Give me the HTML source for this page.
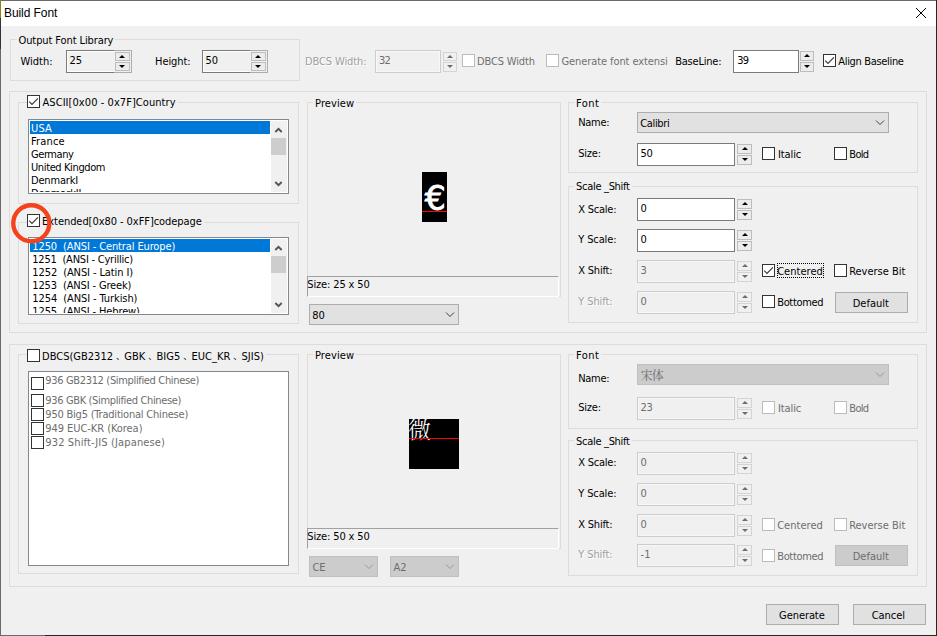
<!DOCTYPE html>
<html lang="en"><head><meta charset="utf-8"><title>Build Font</title>
<style>
html,body{margin:0;padding:0}
body{width:937px;height:636px;overflow:hidden;background:#f0f0f0;position:relative;font-family:'DejaVu Sans Condensed','Liberation Sans',sans-serif;font-size:11px;line-height:13px;color:#000}
.a{position:absolute;box-sizing:border-box}
.tx{position:absolute;white-space:pre;height:13px;line-height:13px}
.lbl{background:#f0f0f0}
.dis{color:#a0a0a0;text-shadow:1px 1px 0 #fff}
.gr{color:#6d6d6d}
.gr2{color:#707070}
.sel{color:#fff}
.cjk{font-family:'DejaVu Sans Condensed','Liberation Sans','Noto Serif CJK SC',sans-serif}
.ic{display:inline-block;width:11.3px;font-size:9px;line-height:13px;text-indent:3px;vertical-align:baseline;letter-spacing:0;position:relative;top:-1px}
.cjk12{font-family:'Liberation Serif','Noto Serif CJK SC',serif;font-size:12px}
.gb{position:absolute;box-sizing:border-box;border:1px solid #dcdcdc}
.ed{position:absolute;box-sizing:border-box;border:1px solid #7a7a7a;background:#fff}
.ed.ro{background:#f0f0f0;box-shadow:inset 1px 0 0 #fff,inset 0 1px 0 #fff,inset 0 -1px 0 #fff}
.ed.d{border-color:#cccccc;background:#f0f0f0;box-shadow:inset 0 0 0 1px #f7f7f7}
.sb{position:absolute;box-sizing:border-box;width:15px;height:10px;border:1px solid #bdbdbd;background:#ececec}
.sb i{position:absolute;left:4px;top:2px;width:0;height:0;border-left:3px solid transparent;border-right:3px solid transparent}
.sb.u i{border-bottom:3px solid #000;top:2px}
.sb.dn i{border-top:3px solid #000;top:2px}
.sb.x{border-color:#d4d4d4;background:#f0f0f0}
.sb.x.u i{border-bottom-color:#6d6d6d}
.sb.x.dn i{border-top-color:#6d6d6d}
.cb{position:absolute;box-sizing:border-box;width:13px;height:13px;border:1px solid #333;background:#fff}
.cb.d{border-color:#bcbcbc}
.cb svg{position:absolute;left:0;top:0}
.bt{position:absolute;box-sizing:border-box;border:1px solid #adadad;background:#e1e1e1}
.bt.d{border-color:#bfbfbf;background:#cccccc}
.lb{position:absolute;box-sizing:border-box;border:1px solid #828790;background:#fff}
.hl{position:absolute;background:#0078d7}

</style></head><body>
<div class="a" style="left:0;top:0;width:937px;height:26px;background:#fff"></div>
<div class="a" style="left:0;top:0;width:937px;height:1px;background:#6a6a66"></div>
<div class="a" style="left:0;top:0;width:1px;height:636px;background:#6a6a6a"></div>
<div class="a" style="left:0;top:18px;width:1px;height:31px;background:#333"></div>
<div class="a" style="left:0;top:0;width:1px;height:18px;background:#858518"></div>
<div class="a" style="left:936px;top:0;width:1px;height:636px;background:#262626"></div>
<div class="a" style="left:0;top:635px;width:937px;height:1px;background:#262626"></div>
<div class="a" style="left:0;top:635px;width:45px;height:1px;background:#6a6a6a"></div>
<div class="tx" style="left:4px;top:6px;letter-spacing:-0.08px;font-family:'Liberation Sans',sans-serif;font-size:12px;line-height:15px;height:15px">Build Font</div>
<svg class="a" style="left:915px;top:7px" width="12" height="12" viewBox="0 0 12 12"><path d="M1 1 L11 11 M11 1 L1 11" stroke="#000" stroke-width="1" fill="none"/></svg>
<div class="gb" style="left:10px;top:39px;width:290px;height:42px"></div>
<div class="gb" style="left:9px;top:91px;width:918px;height:242px"></div>
<div class="gb" style="left:18px;top:102px;width:281px;height:102px"></div>
<div class="gb" style="left:18px;top:222px;width:281px;height:102px"></div>
<div class="gb" style="left:307px;top:102px;width:254px;height:195px"></div>
<div class="gb" style="left:568px;top:102px;width:350px;height:71px"></div>
<div class="gb" style="left:568px;top:186px;width:350px;height:137px"></div>
<div class="gb" style="left:9px;top:344px;width:918px;height:243px"></div>
<div class="gb" style="left:18px;top:354px;width:281px;height:220px"></div>
<div class="gb" style="left:307px;top:354px;width:254px;height:195px"></div>
<div class="gb" style="left:568px;top:354px;width:350px;height:75px"></div>
<div class="gb" style="left:568px;top:440px;width:350px;height:136px"></div>
<div class="a" style="left:307px;top:276px;width:252px;height:21px;background:#f0f0f0;border-top:1px solid #a0a0a0;border-left:1px solid #a0a0a0;border-right:1px solid #fff;border-bottom:1px solid #fff"></div>
<div class="a" style="left:307px;top:528px;width:252px;height:21px;background:#f0f0f0;border-top:1px solid #a0a0a0;border-left:1px solid #a0a0a0;border-right:1px solid #fff;border-bottom:1px solid #fff"></div>
<div class="a" style="left:422px;top:172px;width:25px;height:50px;background:#000;overflow:hidden"><span style="position:absolute;left:0.7px;top:7px;width:25px;text-align:center;color:#fff;font-family:'DejaVu Sans','Liberation Sans',sans-serif;font-size:33px;line-height:40px;-webkit-text-stroke:0.9px #fff">€</span><div class="a" style="left:0;top:39px;width:25px;height:1px;background:#f00"></div></div>
<div class="a" style="left:409px;top:419px;width:50px;height:50px;background:#000;overflow:hidden"><span style="position:absolute;left:-1px;top:-2px;color:#fff;font-family:'Liberation Serif','Noto Serif CJK SC',serif;font-weight:300;font-size:23px;line-height:28px">微</span><div class="a" style="left:0;top:19px;width:50px;height:1px;background:#f00"></div></div>
<div class="a" style="left:66px;top:50px;width:66px;height:23px;border:1px solid #a9acb2;background:#f0f0f0"></div>
<div class="ed ro" style="left:66px;top:50px;width:48px;height:23px;border-right:none"></div>
<div class="sb u" style="left:115px;top:52px;height:9px"><i style="left:3px"></i></div><div class="sb dn" style="left:115px;top:62px;height:9px"><i style="left:3px"></i></div>
<div class="a" style="left:202px;top:50px;width:66px;height:23px;border:1px solid #a9acb2;background:#f0f0f0"></div>
<div class="ed ro" style="left:202px;top:50px;width:48px;height:23px;border-right:none"></div>
<div class="sb u" style="left:251px;top:52px;height:9px"><i style="left:3px"></i></div><div class="sb dn" style="left:251px;top:62px;height:9px"><i style="left:3px"></i></div>
<div class="ed d" style="left:375px;top:50px;width:66px;height:23px"></div>
<div class="sb u x" style="left:443px;top:52px;width:14px;height:9px"><i style="left:2.5px"></i></div><div class="sb dn x" style="left:443px;top:62px;width:14px;height:10px"><i style="left:2.5px"></i></div>
<div class="ed " style="left:733px;top:50px;width:66px;height:23px"></div>
<div class="sb u " style="left:800px;top:51px;width:14px;height:10px"><i style="left:2.5px"></i></div><div class="sb dn " style="left:800px;top:62px;width:14px;height:10px"><i style="left:2.5px"></i></div>
<div class="ed " style="left:637px;top:143px;width:98px;height:23px"></div>
<div class="sb u " style="left:737px;top:144px;width:15px;height:10px"><i style="left:3.5px"></i></div><div class="sb dn " style="left:737px;top:155px;width:15px;height:10px"><i style="left:3.5px"></i></div>
<div class="ed " style="left:637px;top:198px;width:98px;height:23px"></div>
<div class="sb u " style="left:737px;top:199px;width:15px;height:10px"><i style="left:3.5px"></i></div><div class="sb dn " style="left:737px;top:210px;width:15px;height:10px"><i style="left:3.5px"></i></div>
<div class="ed " style="left:637px;top:229px;width:98px;height:23px"></div>
<div class="sb u " style="left:737px;top:230px;width:15px;height:10px"><i style="left:3.5px"></i></div><div class="sb dn " style="left:737px;top:241px;width:15px;height:10px"><i style="left:3.5px"></i></div>
<div class="ed d" style="left:637px;top:260px;width:98px;height:23px"></div>
<div class="sb u x" style="left:737px;top:261px;width:15px;height:10px"><i style="left:3.5px"></i></div><div class="sb dn x" style="left:737px;top:272px;width:15px;height:10px"><i style="left:3.5px"></i></div>
<div class="ed d" style="left:637px;top:291px;width:98px;height:23px"></div>
<div class="sb u x" style="left:737px;top:292px;width:15px;height:10px"><i style="left:3.5px"></i></div><div class="sb dn x" style="left:737px;top:303px;width:15px;height:10px"><i style="left:3.5px"></i></div>
<div class="ed d" style="left:637px;top:397px;width:98px;height:23px"></div>
<div class="sb u x" style="left:737px;top:398px;width:15px;height:10px"><i style="left:3.5px"></i></div><div class="sb dn x" style="left:737px;top:409px;width:15px;height:10px"><i style="left:3.5px"></i></div>
<div class="ed d" style="left:637px;top:452px;width:98px;height:23px"></div>
<div class="sb u x" style="left:737px;top:453px;width:15px;height:10px"><i style="left:3.5px"></i></div><div class="sb dn x" style="left:737px;top:464px;width:15px;height:10px"><i style="left:3.5px"></i></div>
<div class="ed d" style="left:637px;top:483px;width:98px;height:23px"></div>
<div class="sb u x" style="left:737px;top:484px;width:15px;height:10px"><i style="left:3.5px"></i></div><div class="sb dn x" style="left:737px;top:495px;width:15px;height:10px"><i style="left:3.5px"></i></div>
<div class="ed d" style="left:637px;top:514px;width:98px;height:23px"></div>
<div class="sb u x" style="left:737px;top:515px;width:15px;height:10px"><i style="left:3.5px"></i></div><div class="sb dn x" style="left:737px;top:526px;width:15px;height:10px"><i style="left:3.5px"></i></div>
<div class="ed d" style="left:637px;top:544px;width:98px;height:23px"></div>
<div class="sb u x" style="left:737px;top:545px;width:15px;height:10px"><i style="left:3.5px"></i></div><div class="sb dn x" style="left:737px;top:556px;width:15px;height:10px"><i style="left:3.5px"></i></div>
<div class="cb d" style="left:462px;top:54px"></div>
<div class="cb d" style="left:546px;top:54px"></div>
<div class="cb " style="left:823px;top:54px"><svg width="11" height="11" viewBox="0 0 11 11"><path d="M1.2 5.6 L4.0 8.4 L9.9 2.4" stroke="#3c3c3c" stroke-width="1.25" fill="none"/></svg></div>
<div class="cb " style="left:27px;top:95px"><svg width="11" height="11" viewBox="0 0 11 11"><path d="M1.2 5.6 L4.0 8.4 L9.9 2.4" stroke="#3c3c3c" stroke-width="1.25" fill="none"/></svg></div>
<div class="cb " style="left:27px;top:214px"><svg width="11" height="11" viewBox="0 0 11 11"><path d="M1.2 5.6 L4.0 8.4 L9.9 2.4" stroke="#3c3c3c" stroke-width="1.25" fill="none"/></svg></div>
<div class="cb " style="left:27px;top:349px"></div>
<div class="cb " style="left:762px;top:147px"></div>
<div class="cb " style="left:834px;top:147px"></div>
<div class="cb " style="left:762px;top:264px"><svg width="11" height="11" viewBox="0 0 11 11"><path d="M1.2 5.6 L4.0 8.4 L9.9 2.4" stroke="#3c3c3c" stroke-width="1.25" fill="none"/></svg></div>
<div class="cb " style="left:834px;top:264px"></div>
<div class="cb " style="left:762px;top:295px"></div>
<div class="cb d" style="left:762px;top:401px"></div>
<div class="cb d" style="left:834px;top:401px"></div>
<div class="cb d" style="left:762px;top:518px"></div>
<div class="cb d" style="left:834px;top:518px"></div>
<div class="cb d" style="left:762px;top:549px"></div>
<div class="a" style="left:777px;top:263px;width:47px;height:15px;border:1px dotted #000"></div>
<div class="bt " style="left:835px;top:292px;width:73px;height:21px"></div>
<div class="bt d" style="left:835px;top:545px;width:73px;height:21px"></div>
<div class="bt " style="left:766px;top:604px;width:73px;height:21px"></div>
<div class="bt " style="left:853px;top:604px;width:73px;height:21px"></div>
<div class="bt " style="left:637px;top:112px;width:252px;height:21px"></div>
<svg class="a" style="left:875px;top:119px" width="10" height="8" viewBox="0 0 10 8"><path d="M1 1.5 L5 5.5 L9 1.5" stroke="#404040" stroke-width="1" fill="none"/></svg>
<div class="bt " style="left:309px;top:304px;width:150px;height:21px"></div>
<svg class="a" style="left:445px;top:311px" width="10" height="8" viewBox="0 0 10 8"><path d="M1 1.5 L5 5.5 L9 1.5" stroke="#404040" stroke-width="1" fill="none"/></svg>
<div class="bt d" style="left:637px;top:364px;width:252px;height:21px"></div>
<svg class="a" style="left:875px;top:371px" width="10" height="8" viewBox="0 0 10 8"><path d="M1 1.5 L5 5.5 L9 1.5" stroke="#9a9a9a" stroke-width="1" fill="none"/></svg>
<div class="bt d" style="left:309px;top:556px;width:69px;height:21px"></div>
<svg class="a" style="left:364px;top:563px" width="10" height="8" viewBox="0 0 10 8"><path d="M1 1.5 L5 5.5 L9 1.5" stroke="#9a9a9a" stroke-width="1" fill="none"/></svg>
<div class="bt d" style="left:390px;top:556px;width:69px;height:21px"></div>
<svg class="a" style="left:445px;top:563px" width="10" height="8" viewBox="0 0 10 8"><path d="M1 1.5 L5 5.5 L9 1.5" stroke="#9a9a9a" stroke-width="1" fill="none"/></svg>
<div class="lb" style="left:28px;top:119px;width:261px;height:75px"></div>
<div class="hl" style="left:30px;top:121px;width:240px;height:13px"></div>
<div class="a" style="left:271px;top:121px;width:16px;height:71px;background:#f0f0f0"></div>
<div class="a" style="left:271px;top:138px;width:15px;height:17px;background:#cdcdcd"></div>
<svg class="a" style="left:274px;top:126px" width="9" height="8" viewBox="0 0 9 8"><path d="M1.3 6 L4.5 2.8 L7.7 6" stroke="#555" stroke-width="1.9" fill="none"/></svg>
<svg class="a" style="left:274px;top:180px" width="9" height="8" viewBox="0 0 9 8"><path d="M1.3 2 L4.5 5.2 L7.7 2" stroke="#555" stroke-width="1.9" fill="none"/></svg>
<div class="lb" style="left:28px;top:237px;width:261px;height:78px"></div>
<div class="hl" style="left:30px;top:239px;width:240px;height:13px"></div>
<div class="a" style="left:271px;top:239px;width:16px;height:74px;background:#f0f0f0"></div>
<div class="a" style="left:271px;top:256px;width:15px;height:17px;background:#cdcdcd"></div>
<svg class="a" style="left:274px;top:244px" width="9" height="8" viewBox="0 0 9 8"><path d="M1.3 6 L4.5 2.8 L7.7 6" stroke="#555" stroke-width="1.9" fill="none"/></svg>
<svg class="a" style="left:274px;top:301px" width="9" height="8" viewBox="0 0 9 8"><path d="M1.3 2 L4.5 5.2 L7.7 2" stroke="#555" stroke-width="1.9" fill="none"/></svg>
<div class="lb" style="left:28px;top:371px;width:261px;height:195px"></div>
<div class="cb" style="left:31px;top:377px"></div>
<div class="cb" style="left:31px;top:394px"></div>
<div class="cb" style="left:31px;top:408px"></div>
<div class="cb" style="left:31px;top:422px"></div>
<div class="cb" style="left:31px;top:436px"></div>
<div class="a" style="left:29px;top:120px;width:241px;height:71.5px;overflow:hidden">
<div class="tx lb1 sel" style="left:2px;top:2px;letter-spacing:0.14px">USA</div>
<div class="tx lb1" style="left:2px;top:15px;letter-spacing:0.17px">France</div>
<div class="tx lb1" style="left:2px;top:28px;letter-spacing:-0.44px">Germany</div>
<div class="tx lb1" style="left:2px;top:41px;letter-spacing:-0.38px">United Kingdom</div>
<div class="tx lb1" style="left:2px;top:54px;letter-spacing:-0.17px">DenmarkI</div>
<div class="tx lb1" style="left:2px;top:67px;letter-spacing:-0.1px">DenmarkII</div>
</div>
<div class="a" style="left:29px;top:238px;width:241px;height:75px;overflow:hidden">
<div class="tx lb2 sel" style="left:3.3px;top:2px;letter-spacing:-0.12px">1250  (ANSI - Central Europe)</div>
<div class="tx lb2" style="left:3.3px;top:15px;letter-spacing:-0.22px">1251  (ANSI - Cyrillic)</div>
<div class="tx lb2" style="left:3.3px;top:28px;letter-spacing:-0.1px">1252  (ANSI - Latin I)</div>
<div class="tx lb2" style="left:3.3px;top:41px;letter-spacing:-0.14px">1253  (ANSI - Greek)</div>
<div class="tx lb2" style="left:3.3px;top:54px;letter-spacing:-0.09px">1254  (ANSI - Turkish)</div>
<div class="tx lb2" style="left:3.3px;top:67px;letter-spacing:-0.13px">1255  (ANSI - Hebrew)</div>
</div>
<div class="tx lbl" style="left:16.5px;top:34px;padding:0 2px;letter-spacing:-0.1px">Output Font Library</div>
<div class="tx" style="left:20.5px;top:54.6px;letter-spacing:-0.02px">Width:</div>
<div class="tx" style="left:69.5px;top:54px;letter-spacing:-0.09px">25</div>
<div class="tx" style="left:155.1px;top:54.6px;letter-spacing:-0.11px">Height:</div>
<div class="tx" style="left:205.5px;top:54px;letter-spacing:-0.09px">50</div>
<div class="tx dis" style="left:305px;top:54.6px;letter-spacing:-0.11px">DBCS Width:</div>
<div class="tx gr" style="left:379.1px;top:54px;letter-spacing:-0.8px">32</div>
<div class="tx gr2" style="left:477.1px;top:55px;letter-spacing:-0.16px">DBCS Width</div>
<div class="tx gr2" style="left:561.5px;top:55px;letter-spacing:-0.09px">Generate font extensi</div>
<div class="tx" style="left:675.2px;top:54.6px;letter-spacing:-0.22px">BaseLine:</div>
<div class="tx" style="left:737.3px;top:54px;letter-spacing:-0.8px">39</div>
<div class="tx" style="left:838.3px;top:55px;letter-spacing:-0.33px">Align Baseline</div>
<div class="tx lbl" style="left:40.5px;top:96px;padding:0 2px;letter-spacing:0.06px">ASCII[0x00 - 0x7F]Country</div>
<div class="tx lbl" style="left:40.1px;top:215px;padding:0 2px;letter-spacing:-0.06px">Extended[0x80 - 0xFF]codepage</div>
<div class="tx lbl cjk" style="left:40.1px;top:350px;padding:0 2px">DBCS(GB2312<span class="ic">、</span>GBK<span class="ic">、</span>BIG5<span class="ic">、</span>EUC_KR<span class="ic">、</span>SJIS)</div>
<div class="tx lbl" style="left:313.1px;top:96.5px;padding:0 2px;letter-spacing:0.09px">Preview</div>
<div class="tx" style="left:307.3px;top:278px;letter-spacing:-0.14px">Size: 25 x 50</div>
<div class="tx" style="left:312.2px;top:308.5px;letter-spacing:0.11px">80</div>
<div class="tx lbl" style="left:313px;top:349px;padding:0 2px;letter-spacing:0.09px">Preview</div>
<div class="tx" style="left:307.3px;top:530px;letter-spacing:-0.14px">Size: 50 x 50</div>
<div class="tx gr" style="left:312.5px;top:560.5px;letter-spacing:-0.17px">CE</div>
<div class="tx gr" style="left:393.5px;top:560.5px;letter-spacing:-0.06px">A2</div>
<div class="tx lbl" style="left:574.1px;top:96.5px;padding:0 2px;letter-spacing:0.43px">Font</div>
<div class="tx" style="left:578.3px;top:116px;letter-spacing:-0.34px">Name:</div>
<div class="tx" style="left:640.2px;top:117px;letter-spacing:-0.33px">Calibri</div>
<div class="tx" style="left:578.3px;top:147px;letter-spacing:-0.24px">Size:</div>
<div class="tx" style="left:640.5px;top:147px;letter-spacing:-0.19px">50</div>
<div class="tx" style="left:777.9px;top:148px;letter-spacing:-0.08px">Italic</div>
<div class="tx" style="left:849.3px;top:148px;letter-spacing:-0.7px">Bold</div>
<div class="tx lbl" style="left:574.1px;top:180px;padding:0 2px;letter-spacing:-0.31px">Scale _Shift</div>
<div class="tx" style="left:578.3px;top:202.7px;letter-spacing:-0.24px">X Scale:</div>
<div class="tx" style="left:640.5px;top:202px">0</div>
<div class="tx" style="left:578.3px;top:233px;letter-spacing:-0.14px">Y Scale:</div>
<div class="tx" style="left:640.5px;top:233px">0</div>
<div class="tx" style="left:578.3px;top:264px;letter-spacing:-0.22px">X Shift:</div>
<div class="tx gr" style="left:640.5px;top:264px">3</div>
<div class="tx dis" style="left:578.3px;top:295px;letter-spacing:-0.11px">Y Shift:</div>
<div class="tx gr" style="left:640.5px;top:295px">0</div>
<div class="tx" style="left:777.2px;top:265px;letter-spacing:0.02px">Centered</div>
<div class="tx" style="left:849.2px;top:265px;letter-spacing:-0.02px">Reverse Bit</div>
<div class="tx" style="left:777.2px;top:296px;letter-spacing:-0.34px">Bottomed</div>
<div class="tx" style="left:852.7px;top:297px">Default</div>
<div class="tx lbl" style="left:574.1px;top:349px;padding:0 2px;letter-spacing:0.43px">Font</div>
<div class="tx" style="left:578.3px;top:372px;letter-spacing:-0.34px">Name:</div>
<div class="tx gr cjk12" style="left:640.5px;top:370px;letter-spacing:-0.8px">宋体</div>
<div class="tx" style="left:578.3px;top:401px;letter-spacing:-0.24px">Size:</div>
<div class="tx gr" style="left:640.5px;top:401px;letter-spacing:-0.19px">23</div>
<div class="tx gr" style="left:777.9px;top:402px;letter-spacing:-0.08px">Italic</div>
<div class="tx gr" style="left:849.3px;top:402px;letter-spacing:-0.7px">Bold</div>
<div class="tx lbl" style="left:574.1px;top:435px;padding:0 2px;letter-spacing:-0.31px">Scale _Shift</div>
<div class="tx" style="left:578.3px;top:456px;letter-spacing:-0.24px">X Scale:</div>
<div class="tx gr" style="left:640.5px;top:456px">0</div>
<div class="tx" style="left:578.3px;top:487px;letter-spacing:-0.14px">Y Scale:</div>
<div class="tx gr" style="left:640.5px;top:487px">0</div>
<div class="tx" style="left:578.3px;top:518px;letter-spacing:-0.22px">X Shift:</div>
<div class="tx gr" style="left:640.5px;top:518px">0</div>
<div class="tx dis" style="left:578.3px;top:548px;letter-spacing:-0.11px">Y Shift:</div>
<div class="tx gr" style="left:640.5px;top:548px;letter-spacing:0.12px">-1</div>
<div class="tx gr" style="left:777.2px;top:519px;letter-spacing:0.02px">Centered</div>
<div class="tx gr" style="left:849.2px;top:519px;letter-spacing:-0.02px">Reverse Bit</div>
<div class="tx gr" style="left:777.2px;top:550px;letter-spacing:-0.34px">Bottomed</div>
<div class="tx gr" style="left:852.7px;top:550px">Default</div>
<div class="tx" style="left:779.1px;top:609px;letter-spacing:-0.08px">Generate</div>
<div class="tx" style="left:871.8px;top:609px;letter-spacing:-0.09px">Cancel</div>
<div class="tx gr" style="left:45.3px;top:374px;letter-spacing:-0.34px">936 GB2312 (Simplified Chinese)</div>
<div class="tx gr" style="left:45.3px;top:394px;letter-spacing:-0.35px">936 GBK (Simplified Chinese)</div>
<div class="tx gr" style="left:45.3px;top:408px;letter-spacing:-0.21px">950 Big5 (Traditional Chinese)</div>
<div class="tx gr" style="left:45.3px;top:422px;letter-spacing:-0.06px">949 EUC-KR (Korea)</div>
<div class="tx gr" style="left:45.3px;top:436px;letter-spacing:0.13px">932 Shift-JIS (Japanese)</div>
<svg class="a" style="left:9px;top:201px" width="46" height="46" viewBox="0 0 46 46"><circle cx="22.3" cy="22.3" r="18.05" stroke="#f4421d" stroke-width="4.4" fill="none"/></svg>
</body></html>
